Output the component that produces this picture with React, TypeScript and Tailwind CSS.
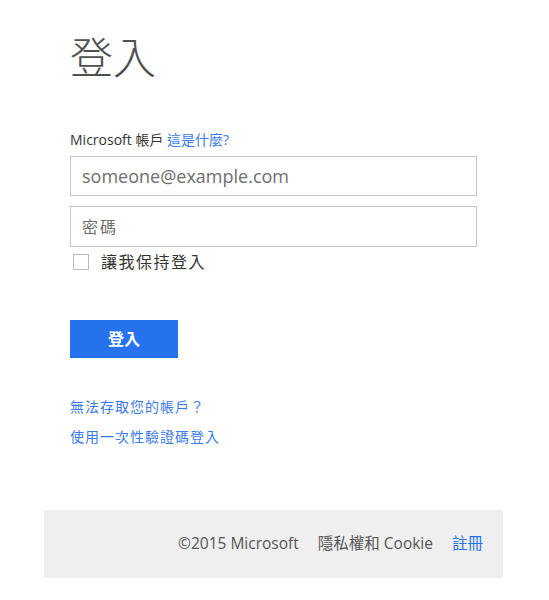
import { useState } from 'react'

const FONT = "font-['Segoe_UI','Open_Sans','Noto_Sans_CJK_TC',sans-serif]"

export default function App() {
  const [keep, setKeep] = useState(false)

  return (
    <div className={`min-h-[600px] bg-white ${FONT}`}>
      <div className="ml-[44px] w-[459px] pt-[30px]">
        <div className="px-[26px]">
          <h1 className="text-[43px] leading-[56px] font-light text-[#505050]">登入</h1>

          <div className="mt-[44px] text-[14px] leading-[20px] text-[#333]">
            Microsoft 帳戶 <a href="#" className="text-[#3a7ae8]">這是什麼?</a>
          </div>

          <input
            type="email"
            placeholder="someone@example.com"
            className="mt-[6px] block h-[40px] w-full border border-[#c4c4c4] px-[11px] text-[18px] text-[#333] placeholder:text-[#6e6e6e] outline-none"
          />
          <input
            type="password"
            placeholder="密碼"
            className="mt-[10px] block h-[41px] w-full border border-[#c4c4c4] px-[11px] text-[16px] tracking-[2px] text-[#333] placeholder:text-[#6e6e6e] outline-none"
          />

          <label className="mt-[3px] flex items-center gap-[12px] text-[16px] tracking-[1.5px] text-[#333]">
            <input
              type="checkbox"
              checked={keep}
              onChange={(e) => setKeep(e.target.checked)}
              className="ml-[3px] h-[16px] w-[16px] appearance-none border border-[#bbb] bg-white"
            />
            讓我保持登入
          </label>

          <button
            type="button"
            className="mt-[46px] block h-[38px] w-[108px] bg-[#2672ec] text-[16px] font-bold text-white"
          >
            登入
          </button>

          <div className="mt-[38px] flex flex-col gap-[8px] text-[14px] tracking-[1px] leading-[22px] text-[#3a7ae8]">
            <a href="#">無法存取您的帳戶？</a>
            <a href="#">使用一次性驗證碼登入</a>
          </div>
        </div>

        <footer className="mt-[62px] flex h-[68px] items-center justify-end gap-[19px] bg-[#efefef] pr-[20px] text-[15.5px] text-[#555]">
          <span>©2015 Microsoft</span>
          <a href="#">隱私權和 Cookie</a>
          <a href="#" className="text-[#2672ec]">註冊</a>
        </footer>
      </div>
    </div>
  )
}
